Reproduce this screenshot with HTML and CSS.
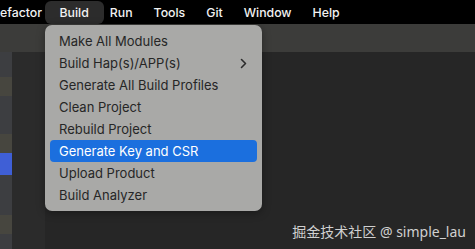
FILE: index.html
```html
<!DOCTYPE html>
<html lang="en">
<head>
    <meta charset="UTF-8">
    <meta name="viewport" content="width=device-width, initial-scale=1.0">
    <title>Build Menu</title>
    <link rel="stylesheet" href="styles.css">
</head>
<body>
    <!-- Menu bar -->
    <div class="menubar">
        <span class="menubar-item first">efactor</span>
        <span class="menubar-item open">Build</span>
        <span class="menubar-item">Run</span>
        <span class="menubar-item">Tools</span>
        <span class="menubar-item">Git</span>
        <span class="menubar-item">Window</span>
        <span class="menubar-item">Help</span>
    </div>

    <!-- IDE behind the menu -->
    <div class="workspace">
        <div class="toolbar"></div>
        <div class="content">
            <div class="gutter">
                <div class="strip"></div>
                <div class="strip olive"></div>
                <div class="strip tall"></div>
                <div class="strip olive"></div>
                <div class="strip blue"></div>
                <div class="strip long"></div>
                <div class="strip olive"></div>
            </div>
            <div class="side-panel"></div>
            <div class="editor"></div>
        </div>
    </div>

    <!-- Build dropdown -->
    <div class="dropdown">
        <div class="dropdown-item">Make All Modules</div>
        <div class="dropdown-item has-sub">
            <span>Build Hap(s)/APP(s)</span>
            <svg class="chevron" width="7" height="11" viewBox="0 0 7 11"><path d="M1.5 1.5 L5.5 5.5 L1.5 9.5" fill="none" stroke="#2b2b2b" stroke-width="1.6" stroke-linecap="round" stroke-linejoin="round"/></svg>
        </div>
        <div class="dropdown-item">Generate All Build Profiles</div>
        <div class="dropdown-item">Clean Project</div>
        <div class="dropdown-item">Rebuild Project</div>
        <div class="dropdown-item selected">Generate Key and CSR</div>
        <div class="dropdown-item">Upload Product</div>
        <div class="dropdown-item">Build Analyzer</div>
    </div>

    <div class="watermark">掘金技术社区 @ simple_lau</div>
</body>
</html>
```

FILE: styles.css
```css
body {
    margin: 0;
    width: 475px;
    height: 249px;
    overflow: hidden;
    background-color: #262626;
    font-family: 'Inter', 'Liberation Sans', sans-serif;
    display: flex;
    flex-direction: column;
    position: relative;
}

.menubar {
    height: 24px;
    background-color: #000;
    display: flex;
    align-items: stretch;
}

.menubar-item {
    color: #f2f2f2;
    font-size: 12.3px;
    font-weight: 500;
    padding: 0 10.5px;
    display: flex;
    align-items: center;
}

.menubar-item.first {
    padding-left: 0;
    padding-right: 7px;
}

.menubar-item.open {
    background-color: #2c2c2c;
    padding: 0 15px;
    margin: 1px -4.5px 0;
    border-radius: 6px;
}

.workspace {
    flex: 1;
    display: flex;
    flex-direction: column;
}

.toolbar {
    height: 28px;
    background-color: #3c3c3a;
}

.content {
    flex: 1;
    display: flex;
}

.gutter {
    width: 12px;
    background-color: #3d3e41;
    display: flex;
    flex-direction: column;
}

.strip {
    height: 25px;
}

.strip.olive {
    height: 19px;
    background-color: #47463f;
}

.strip.tall {
    height: 38px;
}

.strip.blue {
    height: 22px;
    background-color: #3f5fd6;
}

.strip.long {
    height: 40px;
}

.side-panel {
    width: 33px;
    background-color: #2b2b2b;
}

.editor {
    flex: 1;
    background-color: #262626;
}

/* Dropdown */
.dropdown {
    position: absolute;
    top: 25px;
    left: 45px;
    width: 207px;
    padding: 5px 5px;
    background-color: #a9a9a7;
    border-radius: 7px;
    box-shadow: 0 2px 8px rgba(0, 0, 0, 0.35);
}

.dropdown-item {
    height: 22px;
    padding: 0 9px;
    display: flex;
    align-items: center;
    justify-content: space-between;
    color: #262626;
    font-size: 13px;
    border-radius: 4px;
}

.dropdown-item.selected {
    background-color: #1b6fde;
    color: #fff;
}

.chevron {
    margin-right: 1px;
}

.watermark {
    position: absolute;
    right: 9px;
    bottom: 8px;
    color: #d0d0d0;
    font-size: 14px;
    font-family: 'Noto Sans', 'Noto Sans CJK SC', sans-serif;
}
```
